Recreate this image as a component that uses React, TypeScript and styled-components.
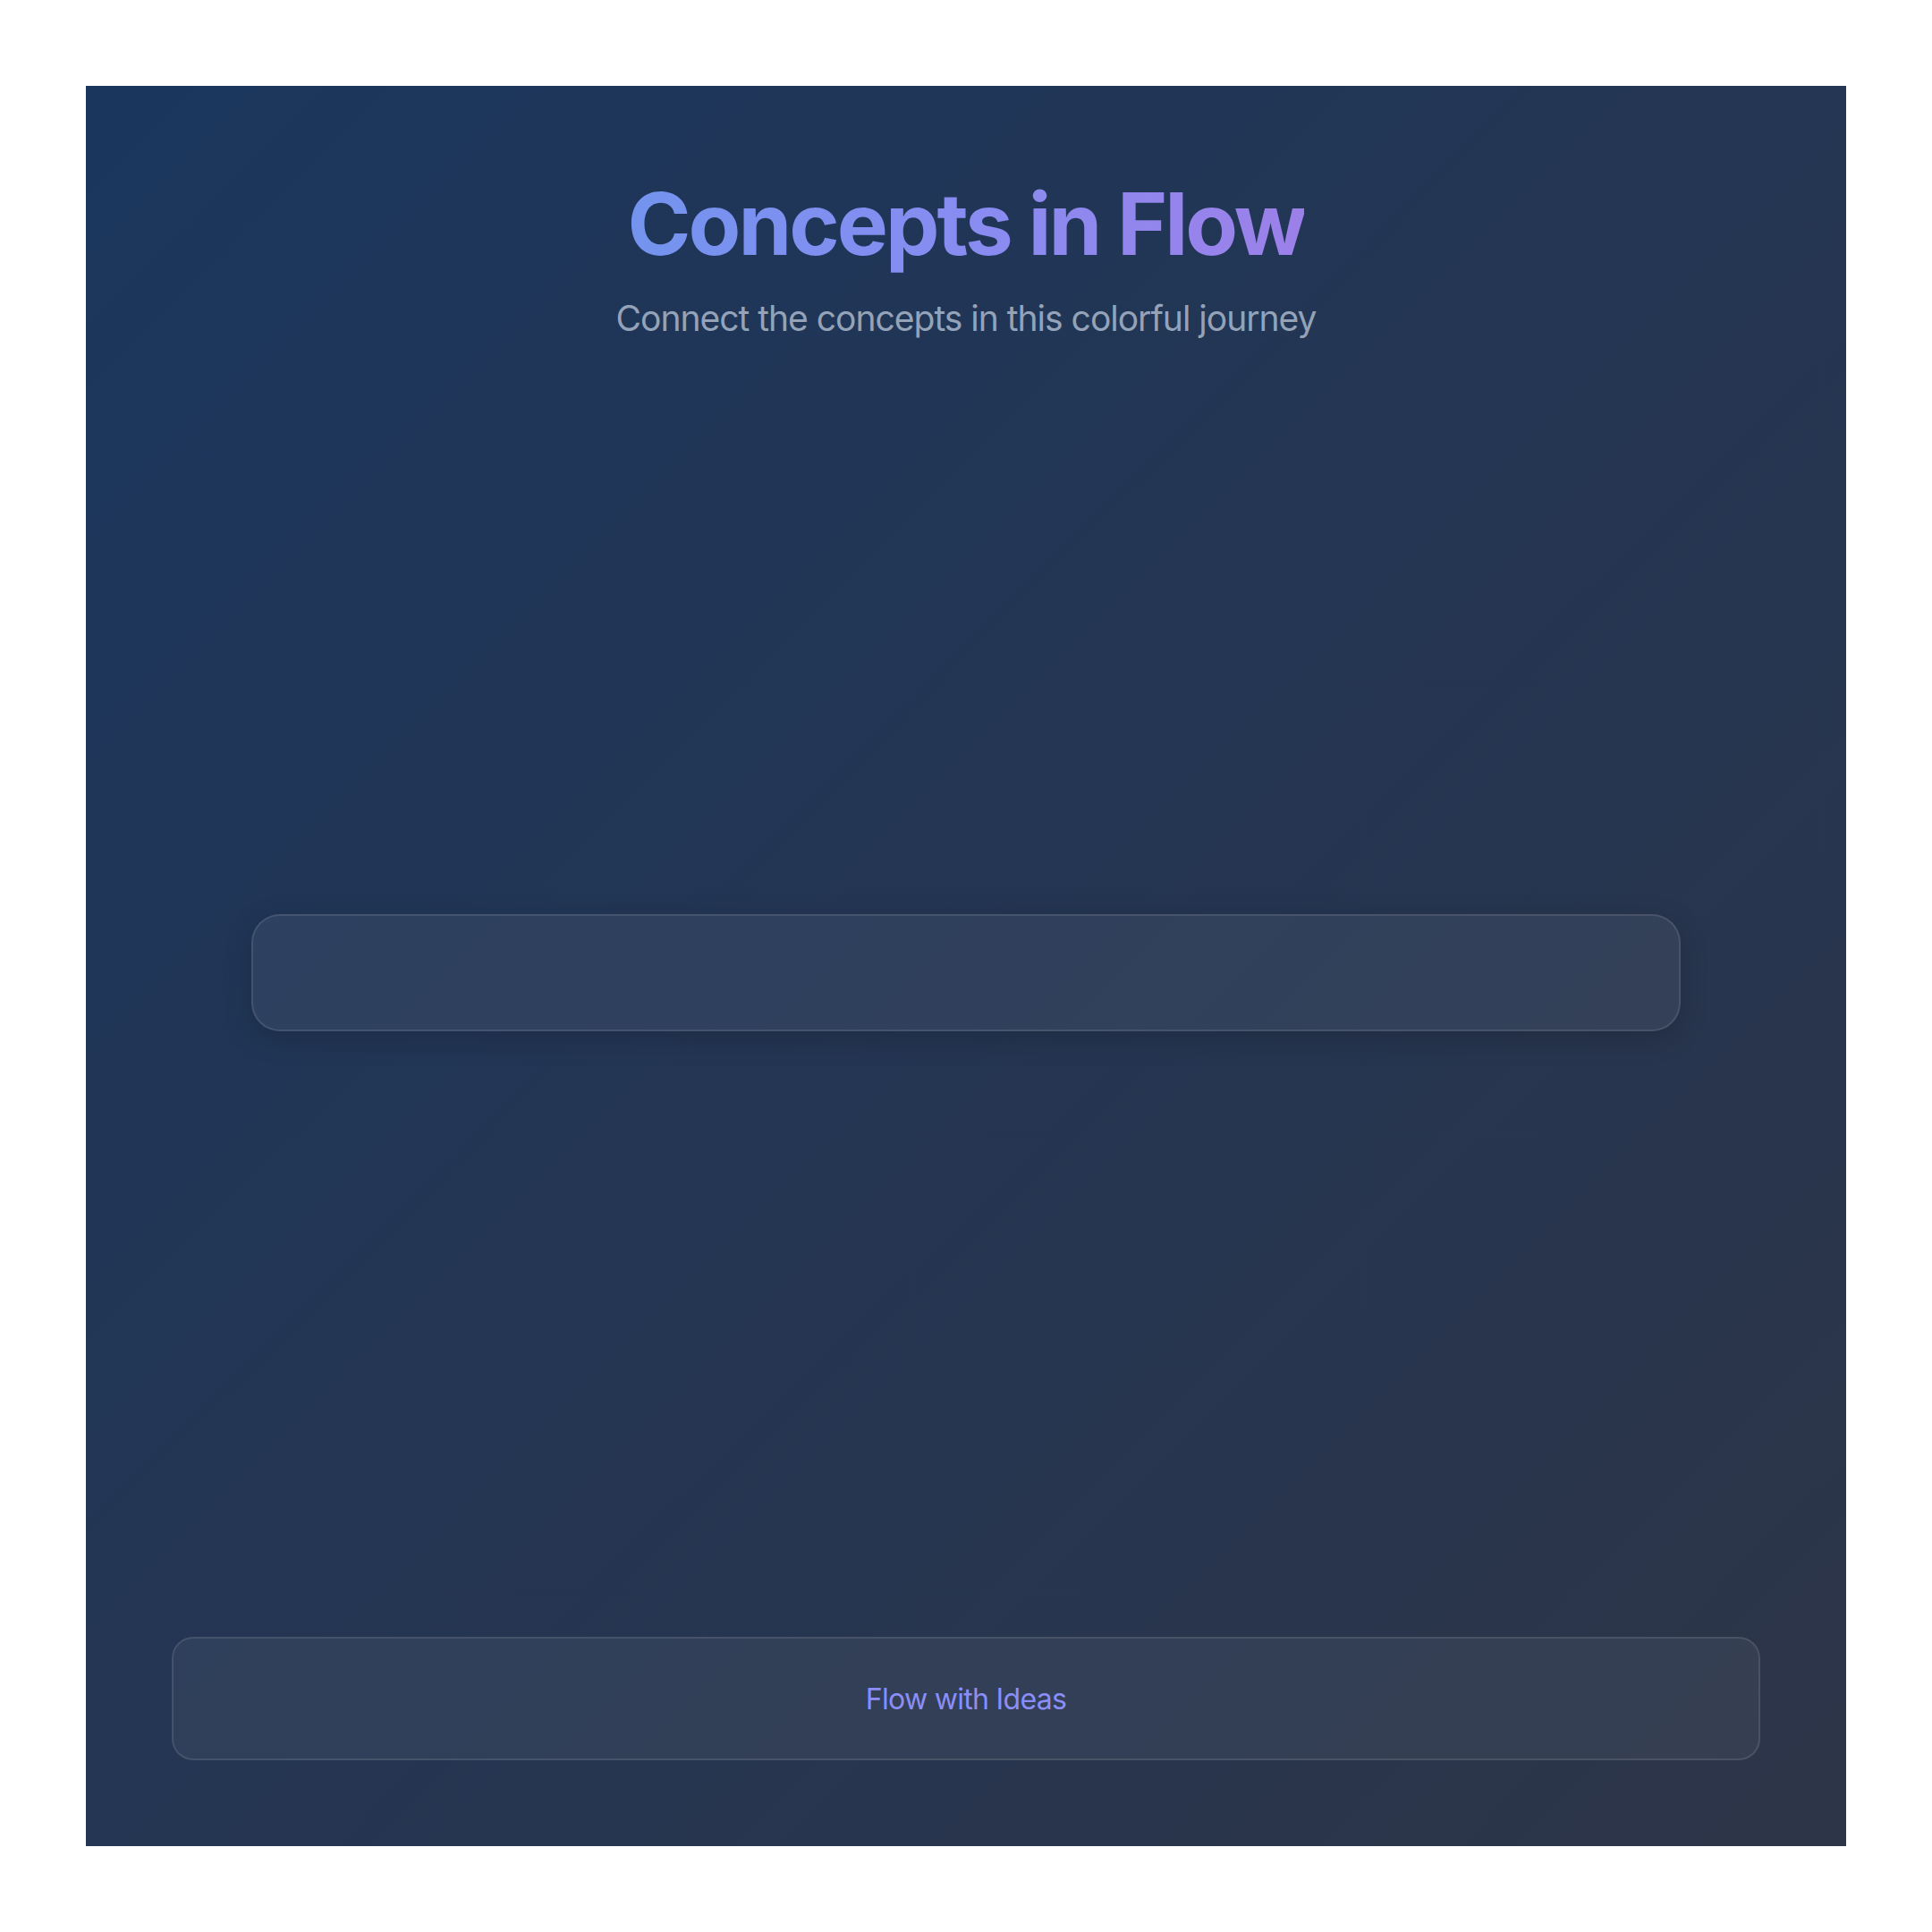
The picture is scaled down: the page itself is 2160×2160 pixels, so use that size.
import styled, { createGlobalStyle } from "styled-components";

const GlobalStyle = createGlobalStyle`
  body {
    margin: 0;
    background: #ffffff;
    font-family: Inter, "Noto Sans", "Liberation Sans", sans-serif;
  }
`;

const App = () => {
  return (
    <>
      <GlobalStyle />
      <Page>
        <Panel>
          <Header>
            <Title>Concepts in Flow</Title>
            <Subtitle>Connect the concepts in this colorful journey</Subtitle>
          </Header>
          <Main>
            <FlowCard />
          </Main>
          <Footer>
            <FooterText>Flow with Ideas</FooterText>
          </Footer>
        </Panel>
      </Page>
    </>
  );
};

const Page = styled.div`
  width: 2160px;
  height: 2160px;
  padding: 96px;
  box-sizing: border-box;
`;

const Panel = styled.div`
  width: 100%;
  height: 100%;
  box-sizing: border-box;
  padding: 96px;
  display: flex;
  flex-direction: column;
  background: linear-gradient(135deg, #1b365d 0%, #2d3548 100%);
`;

const Header = styled.header`
  display: flex;
  flex-direction: column;
  align-items: center;
  text-align: center;
`;

const Title = styled.h1`
  margin: 0 0 18px;
  font-size: 96px;
  line-height: 1.22;
  font-weight: 700;
  letter-spacing: -3px;
  background: linear-gradient(90deg, #7394ee 0%, #888cf1 50%, #9c80e9 100%);
  -webkit-background-clip: text;
  background-clip: text;
  color: transparent;
`;

const Subtitle = styled.p`
  margin: 0;
  font-size: 39px;
  line-height: 1.5;
  letter-spacing: -1px;
  color: #94a3b8;
`;

const Main = styled.main`
  flex: 1;
  display: flex;
  align-items: center;
  justify-content: center;
  padding-bottom: 40px;
`;

const FlowCard = styled.div`
  width: 1598px;
  height: 131px;
  box-sizing: border-box;
  border-radius: 32px;
  background: rgba(255, 255, 255, 0.06);
  border: 2px solid rgba(255, 255, 255, 0.1);
  box-shadow: 0 8px 32px rgba(0, 0, 0, 0.18);
`;

const Footer = styled.footer`
  height: 138px;
  box-sizing: border-box;
  display: flex;
  align-items: center;
  justify-content: center;
  border-radius: 24px;
  background: rgba(255, 255, 255, 0.05);
  border: 2px solid rgba(255, 255, 255, 0.1);
`;

const FooterText = styled.span`
  font-size: 32px;
  letter-spacing: -0.7px;
  color: #8b8ef8;
`;

export default App;
